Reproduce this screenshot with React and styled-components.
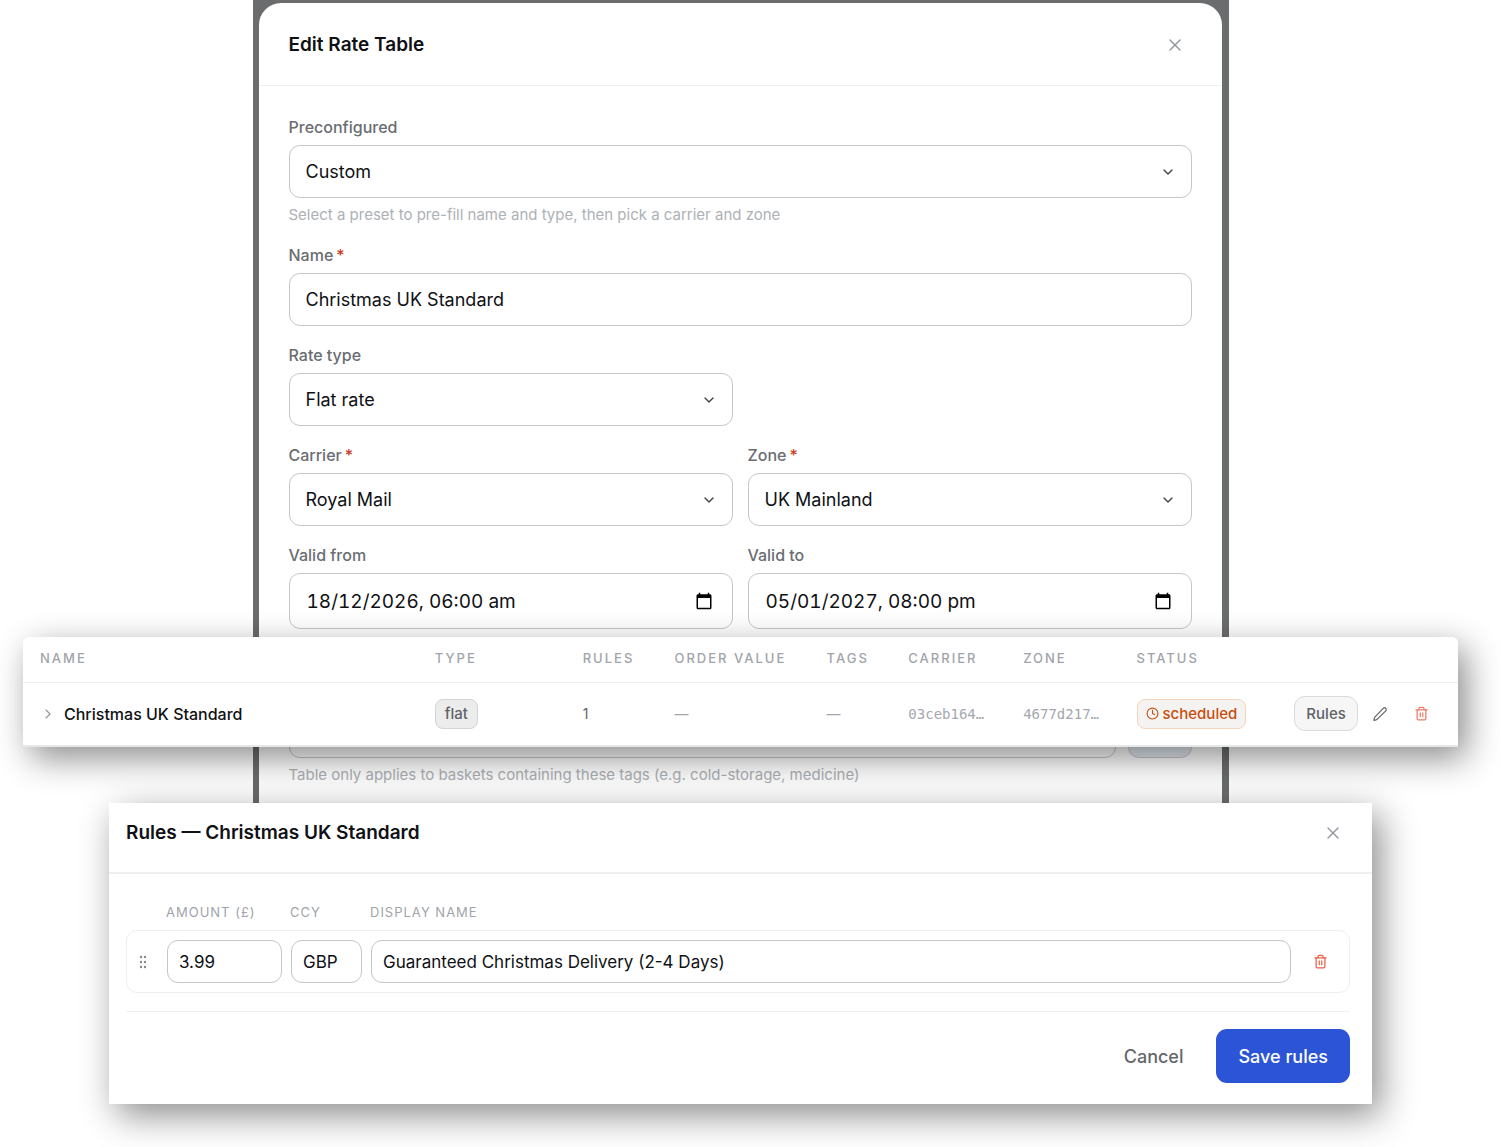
import React from "react"
import styled, { createGlobalStyle } from "styled-components"
import { X, ChevronDown, ChevronRight, Clock, Trash2 } from "lucide-react"

const GlobalStyle = createGlobalStyle`
  * {
    box-sizing: border-box;
  }
  body {
    margin: 0;
    background: #fff;
    color: #0f1115;
    font-family: Inter, "Liberation Sans", sans-serif;
    font-size: 18px;
  }
  button,
  input,
  select {
    font: inherit;
    color: inherit;
    margin: 0;
  }
`

const Stage = styled.main`
  display: flex;
  flex-direction: column;
  align-items: center;
  padding: 0 42px 43px 23px;
`

const Backdrop = styled.div`
  width: 100%;
  max-width: 976px;
  padding: 3px 7px 0 6px;
  background: #6b6c6d;
`

const Modal = styled.section`
  background: #fff;
  border-radius: 22px 22px 0 0;
`

const ModalHeader = styled.header`
  display: flex;
  align-items: center;
  justify-content: space-between;
  padding: ${({ $inset }) =>
    $inset ? "16px 29px 25px 17px" : "28px 37px 26px 30px"};
  border-bottom: ${({ $inset }) => ($inset ? "2px" : "1px")} solid #eeeff0;
`

const Title = styled.h2`
  margin: 0;
  font-size: 19px;
  line-height: 28px;
  font-weight: 600;
`

const IconButton = styled.button`
  display: inline-flex;
  align-items: center;
  justify-content: center;
  flex: none;
  padding: 0;
  border: 0;
  background: none;
  cursor: pointer;
  color: ${({ $tone }) => $tone || "#94979d"};
`

const Form = styled.form`
  display: grid;
  grid-template-columns: 1fr 1fr;
  gap: 19px 15px;
  padding: 31px 30px 40px;
`

const FieldBox = styled.div`
  grid-column: ${({ $wide }) => ($wide ? "1 / -1" : "auto")};
  display: flex;
  flex-direction: column;
`

const Label = styled.label`
  margin-bottom: 8px;
  font-size: 16px;
  line-height: 20px;
  font-weight: 500;
  color: #6a6d72;
`

const Required = styled.span`
  margin-left: 3px;
  color: #cc3a24;
`

const Hint = styled.p`
  margin: 6px 0 0;
  font-size: 15px;
  line-height: 22px;
  color: #adb1b6;
`

const Control = styled.div`
  position: relative;
  display: flex;
  align-items: center;
  svg {
    position: absolute;
    right: ${({ $iconInset }) => $iconInset || "16px"};
    pointer-events: none;
  }
`

const Input = styled.input`
  width: 100%;
  height: 53px;
  padding: 0 16px;
  border: 1px solid #c5c6c8;
  border-radius: 11px;
  background: transparent;
`

const DateInput = styled(Input)`
  height: 56px;
  padding: 0 17px;
  font-size: 19px;
  font-variant-numeric: tabular-nums;
`

const Select = styled(Input).attrs({ as: "select" })`
  appearance: none;
`

const TagRow = styled.div`
  grid-column: 1 / -1;
  display: grid;
  grid-template-columns: 1fr 64px;
  column-gap: 12px;
  padding-top: 57px;
`

const AddButton = styled.button`
  border: 1px solid #c5cad2;
  border-radius: 11px;
  background: #e6ebf0;
`

const TagHint = styled(Hint)`
  grid-column: 1 / -1;
`

const floating = `
  width: 100%;
  background: #fff;
  box-shadow: 8px 11px 34px rgba(0, 0, 0, 0.46);
  z-index: 1;
`

const TablePanel = styled.section`
  ${floating}
  max-width: 1435px;
  margin-top: -189px;
  border-radius: 6px 6px 0 0;
`

const Table = styled.table`
  width: 100%;
  table-layout: fixed;
  border-collapse: collapse;
  text-align: left;
`

const Th = styled.th`
  height: 45px;
  padding: 0 0 2px;
  border-bottom: 1px solid #eeeff0;
  font-size: 13px;
  line-height: 16px;
  font-weight: 500;
  letter-spacing: 2px;
  white-space: nowrap;
  color: #a0a4aa;
  &:first-child {
    padding-left: 17px;
  }
`

const Td = styled.td`
  height: 64px;
  padding: 0;
  border-bottom: 2px solid #e6e7e8;
  font-size: 14px;
  color: ${({ $muted }) => ($muted ? "#a4a8ae" : "#5f6267")};
  &:first-child {
    padding-left: 17px;
  }
`

const RowName = styled.div`
  display: flex;
  align-items: center;
  gap: 8px;
  font-size: 16px;
  font-weight: 500;
  color: #0f1115;
`

const Code = styled.code`
  font-family: "DejaVu Sans Mono", monospace;
  font-size: 14px;
`

const Badge = styled.span`
  display: inline-flex;
  align-items: center;
  gap: 4px;
  height: 30px;
  padding: 0 ${({ $warm }) => ($warm ? "8px" : "9px")};
  border: 1px solid ${({ $warm }) => ($warm ? "#f7d3b8" : "#d3d4d6")};
  border-radius: 8px;
  background: ${({ $warm }) => ($warm ? "#f5f3f1" : "#ececed")};
  color: ${({ $warm }) => ($warm ? "#c84e10" : "#5f6267")};
  font-size: 15px;
  font-weight: 500;
`

const RowActions = styled.div`
  display: flex;
  align-items: center;
`

const SmallButton = styled.button`
  height: 35px;
  padding: 0 11px;
  margin-right: 14px;
  border: 1px solid #d9dadb;
  border-radius: 11px;
  background: #f6f6f7;
  color: #5f6267;
  font-size: 15px;
  font-weight: 500;
`

const EditButton = styled(IconButton)`
  margin-right: 26px;
`

const RulesPanel = styled.section`
  ${floating}
  max-width: 1263px;
  margin-top: 56px;
`

const RulesForm = styled.form`
  padding: 29px 22px 21px 17px;
`

const RuleGrid = styled.div`
  display: grid;
  grid-template-columns: 31px 115px 71px 1fr 40px;
  column-gap: 9px;
  align-items: center;
`

const RuleHead = styled(RuleGrid)`
  padding-bottom: 9px;
`

const RuleLabel = styled.label`
  font-size: 13px;
  line-height: 18px;
  letter-spacing: 1px;
  color: #a0a4aa;
`

const RuleRow = styled(RuleGrid)`
  padding: 9px 9px 9px 0;
  border: 1px solid #eeeff0;
  border-radius: 11px;
`

const RuleInput = styled(Input)`
  height: 43px;
  padding: 0 11px;
  font-size: 17px;
`

const Handle = styled(IconButton)`
  cursor: grab;
`

const Footer = styled.footer`
  display: flex;
  justify-content: flex-end;
  margin-top: 18px;
  padding-top: 17px;
  border-top: 1px solid #eeeff0;
`

const Button = styled.button`
  height: 54px;
  padding: 0 ${({ $primary }) => ($primary ? "22px" : "33px")};
  border: 0;
  border-radius: 11px;
  background: ${({ $primary }) => ($primary ? "#2b54d6" : "none")};
  color: ${({ $primary }) => ($primary ? "#fff" : "#64676c")};
  font-weight: 500;
  cursor: pointer;
`

const CalendarIcon = () => (
  <svg width="18" height="18" viewBox="0 0 24 24" fill="#000" aria-hidden="true">
    <path d="M20 3h-1V1h-2v2H7V1H5v2H4c-1.1 0-2 .9-2 2v16c0 1.1.9 2 2 2h16c1.1 0 2-.9 2-2V5c0-1.1-.9-2-2-2zm0 18H4V8h16v13z" />
  </svg>
)

const PencilIcon = () => (
  <svg
    width="16"
    height="16"
    viewBox="0 0 24 24"
    fill="none"
    stroke="currentColor"
    strokeWidth="1.75"
    strokeLinejoin="round"
    aria-hidden="true"
  >
    <path d="M16.9 3.5a2.6 2.6 0 0 1 3.7 3.7L8 19.8a4.5 4.5 0 0 1-1.9 1.1L2.9 21.5l.6-3.2a4.5 4.5 0 0 1 1.1-1.9z" />
  </svg>
)

const GripIcon = () => (
  <svg width="8" height="14" viewBox="0 0 8 14" fill="#85888d" aria-hidden="true">
    {[2, 7, 12].map(y => (
      <g key={y}>
        <circle cx="2" cy={y} r="1.2" />
        <circle cx="6" cy={y} r="1.2" />
      </g>
    ))}
  </svg>
)

const Field = ({ id, label, required, wide, hint, iconInset, children }) => (
  <FieldBox $wide={wide}>
    <Label htmlFor={id}>
      {label}
      {required && <Required>*</Required>}
    </Label>
    <Control $iconInset={iconInset}>{children}</Control>
    {hint && <Hint>{hint}</Hint>}
  </FieldBox>
)

const SelectField = ({ value, ...props }) => (
  <Field {...props}>
    <Select id={props.id} defaultValue={value}>
      <option>{value}</option>
    </Select>
    <ChevronDown size={16} strokeWidth={2} color="#3c3f44" />
  </Field>
)

const DateField = ({ value, ...props }) => (
  <Field {...props} iconInset="20px">
    <DateInput id={props.id} defaultValue={value} />
    <CalendarIcon />
  </Field>
)

const columns = [
  ["Name", "28.7%"],
  ["Type", "10.3%"],
  ["Rules", "6.4%"],
  ["Order value", "10.6%"],
  ["Tags", "5.7%"],
  ["Carrier", "8%"],
  ["Zone", "7.9%"],
  ["Status", "11%"],
]

const App = () => (
  <>
    <GlobalStyle />
    <Stage>
      <Backdrop>
        <Modal>
          <ModalHeader>
            <Title>Edit Rate Table</Title>
            <IconButton type="button" aria-label="Close">
              <X size={20} strokeWidth={1.75} />
            </IconButton>
          </ModalHeader>
          <Form>
            <SelectField
              id="preset"
              label="Preconfigured"
              value="Custom"
              hint="Select a preset to pre-fill name and type, then pick a carrier and zone"
              wide
            />
            <Field id="name" label="Name" required wide>
              <Input id="name" defaultValue="Christmas UK Standard" />
            </Field>
            <SelectField id="rate-type" label="Rate type" value="Flat rate" />
            <span />
            <SelectField id="carrier" label="Carrier" value="Royal Mail" required />
            <SelectField id="zone" label="Zone" value="UK Mainland" required />
            <DateField id="from" label="Valid from" value="18/12/2026, 06:00 am" />
            <DateField id="to" label="Valid to" value="05/01/2027, 08:00 pm" />
            <TagRow>
              <Input aria-label="Tags" />
              <AddButton type="button" aria-label="Add tag" />
              <TagHint>
                Table only applies to baskets containing these tags (e.g.
                cold-storage, medicine)
              </TagHint>
            </TagRow>
          </Form>
        </Modal>
      </Backdrop>

      <TablePanel>
        <Table>
          <colgroup>
            {columns.map(([name, width]) => (
              <col key={name} style={{ width }} />
            ))}
            <col />
          </colgroup>
          <thead>
            <tr>
              {columns.map(([name]) => (
                <Th key={name} scope="col">
                  {name.toUpperCase()}
                </Th>
              ))}
              <Th aria-label="Actions" />
            </tr>
          </thead>
          <tbody>
            <tr>
              <Td>
                <RowName>
                  <IconButton type="button" aria-label="Expand row">
                    <ChevronRight size={16} strokeWidth={1.75} />
                  </IconButton>
                  Christmas UK Standard
                </RowName>
              </Td>
              <Td>
                <Badge>flat</Badge>
              </Td>
              <Td>1</Td>
              <Td $muted>—</Td>
              <Td $muted>—</Td>
              <Td $muted>
                <Code>03ceb164…</Code>
              </Td>
              <Td $muted>
                <Code>4677d217…</Code>
              </Td>
              <Td>
                <Badge $warm>
                  <Clock size={13} strokeWidth={2} />
                  scheduled
                </Badge>
              </Td>
              <Td>
                <RowActions>
                  <SmallButton type="button">Rules</SmallButton>
                  <EditButton type="button" aria-label="Edit" $tone="#5f6267">
                    <PencilIcon />
                  </EditButton>
                  <IconButton type="button" aria-label="Delete" $tone="#ee7c68">
                    <Trash2 size={15} strokeWidth={2} />
                  </IconButton>
                </RowActions>
              </Td>
            </tr>
          </tbody>
        </Table>
      </TablePanel>

      <RulesPanel>
        <ModalHeader $inset>
          <Title>Rules — Christmas UK Standard</Title>
          <IconButton type="button" aria-label="Close rules">
            <X size={20} strokeWidth={1.75} />
          </IconButton>
        </ModalHeader>
        <RulesForm>
          <RuleHead>
            <span />
            <RuleLabel htmlFor="amount">AMOUNT (£)</RuleLabel>
            <RuleLabel htmlFor="ccy">CCY</RuleLabel>
            <RuleLabel htmlFor="display-name">DISPLAY NAME</RuleLabel>
          </RuleHead>
          <RuleRow>
            <Handle type="button" aria-label="Reorder rule">
              <GripIcon />
            </Handle>
            <RuleInput id="amount" defaultValue="3.99" />
            <RuleInput id="ccy" defaultValue="GBP" />
            <RuleInput
              id="display-name"
              defaultValue="Guaranteed Christmas Delivery (2-4 Days)"
            />
            <IconButton type="button" aria-label="Delete rule" $tone="#e8604a">
              <Trash2 size={15} strokeWidth={2} />
            </IconButton>
          </RuleRow>
          <Footer>
            <Button type="button">Cancel</Button>
            <Button type="submit" $primary>
              Save rules
            </Button>
          </Footer>
        </RulesForm>
      </RulesPanel>
    </Stage>
  </>
)

export default App
